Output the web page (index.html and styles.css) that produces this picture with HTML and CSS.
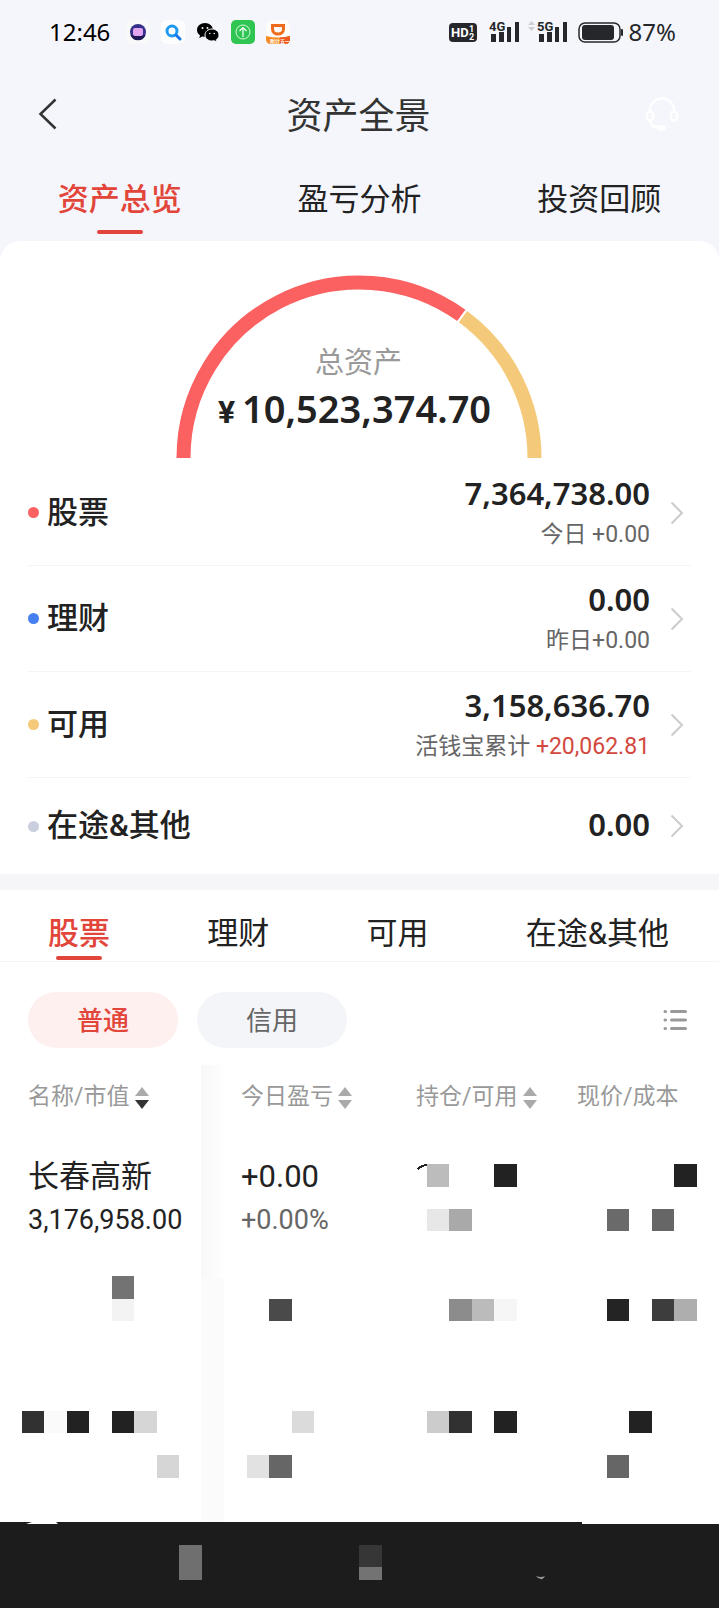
FILE: index.html
```
<!DOCTYPE html>
<html lang="zh-CN">
<head>
    <meta charset="UTF-8">
    <meta name="viewport" content="width=device-width, initial-scale=1.0">
    <title>资产全景</title>
    <link rel="stylesheet" href="styles.css">
</head>
<body>
    <!-- 状态栏 -->
    <div class="status-bar">
        <span class="status-text time">12:46</span>
        <div class="status-apps">
            <svg width="24" height="24" viewBox="0 0 24 24">
                <rect width="24" height="24" rx="6" fill="#f9f9fa"/>
                <circle cx="12" cy="12" r="8" fill="#35318a"/>
                <path d="M4.500 15a8 8 0 0 0 15 0z" fill="#1f1a55"/>
                <rect x="7" y="8" width="10" height="8" rx="2" fill="#e3a5f0"/>
            </svg>
            <svg width="24" height="24" viewBox="0 0 24 24">
                <rect width="24" height="24" rx="6" fill="#fdfdfd"/>
                <circle cx="11" cy="11" r="5" fill="none" stroke="#1e9bf0" stroke-width="3"/>
                <path d="M15 15l4 4" stroke="#1477ee" stroke-width="3" stroke-linecap="round"/>
            </svg>
            <svg width="24" height="24" viewBox="0 0 24 24">
                <path d="M9 3C4.500 3 1 6 1 10c0 2.200 1.100 4 3 5.300L3.300 18l3-1.600c.9.200 1.800.4 2.700.4 4.400 0 8-3 8-6.800S13.400 3 9 3z" fill="#000"/>
                <path d="M16 9c-4 0-7 2.600-7 6s3 6 7 6c.8 0 1.600-.1 2.300-.3l2.700 1.300-.6-2.300C22 18.600 23 17 23 15c0-3.400-3-6-7-6z" fill="#000" stroke="#f5f6fb" stroke-width="1"/>
                <circle cx="6.500" cy="8" r="1" fill="#f5f6fb"/>
                <circle cx="11.500" cy="8" r="1" fill="#f5f6fb"/>
                <circle cx="13.800" cy="13.500" r=".8" fill="#f5f6fb"/>
                <circle cx="18.200" cy="13.500" r=".8" fill="#f5f6fb"/>
            </svg>
            <svg width="24" height="24" viewBox="0 0 24 24">
                <rect width="24" height="24" rx="5" fill="#2fc552"/>
                <circle cx="12" cy="12" r="7" fill="none" stroke="#d9f7df" stroke-width="1"/>
                <path d="M12 17V8M8.500 11L12 7.500 15.500 11" fill="none" stroke="#fff" stroke-width="1.200"/>
            </svg>
            <svg width="24" height="24" viewBox="0 0 24 24">
                <rect width="24" height="24" rx="6" fill="#fdfcfb"/>
                <path d="M0 16q12 3 24 0v3q0 5-5 5H5q-5 0-5-5z" fill="#f68a1f"/>
                <path d="M14 17.500q6-.3 10-1.500v3q0 5-5 5h-5z" fill="#ee5a22"/>
                <path d="M6.500 5.500H17.500V9a5.500 5 0 0 1-11 0z" fill="none" stroke="#ee6c1c" stroke-width="3"/>
                <text x="4" y="23" class="mini-label">附计五一</text>
            </svg>
        </div>
        <div class="status-signals">
            <svg width="35" height="24" viewBox="0 0 35 24">
                <rect y="3" width="28" height="19" rx="4" fill="#25272b"/>
                <text x="2" y="17" class="hd-label">HD</text>
                <text x="20" y="12" class="hd-sub">1</text>
                <text x="20" y="20" class="hd-sub">2</text>
            </svg>
            <svg width="34" height="24" viewBox="0 0 34 24">
                <text x="0" y="11" class="net-label">4G</text>
                <path d="M2 14h5v8H2zM10 12h5v10h-5zM18 7h4v15h-4zM26 2h4v20h-4z" fill="#25272b"/>
            </svg>
            <svg width="45" height="24" viewBox="0 0 45 24">
                <path d="M0 5l3.500-4L7 5zM0 7h7l-3.500 4z" fill="#cfd0d4"/>
                <text x="9" y="11" class="net-label">5G</text>
                <path d="M11 14h5v8h-5zM19 12h5v10h-5zM27 7h4v15h-4zM35 2h4v20h-4z" fill="#25272b"/>
            </svg>
            <svg width="46" height="24" viewBox="0 0 46 24">
                <rect x="1" y="3" width="41" height="19" rx="6" fill="none" stroke="#25272b" stroke-width="1.500"/>
                <rect x="4" y="5" width="32" height="15" rx="3" fill="#25272b"/>
                <rect x="43" y="9" width="2" height="7" rx="1" fill="#25272b"/>
            </svg>
            <span class="status-text">87%</span>
        </div>
    </div>

    <!-- 标题栏 -->
    <header class="title-bar">
        <button class="icon-btn" aria-label="返回">
            <svg width="20" height="32" viewBox="0 0 20 32"><path d="M17.500 1.500L2.500 16l15 14.500" fill="none" stroke="#333" stroke-width="2.500"/></svg>
        </button>
        <h1>资产全景</h1>
        <button class="icon-btn" aria-label="客服">
            <svg width="34" height="34" viewBox="0 0 34 34" fill="none" stroke="#fff" stroke-width="2.400">
                <path d="M4.500 14.500a12.500 13 0 0 1 25 0"/>
                <rect x="2" y="14.500" width="6" height="9" rx="3"/>
                <rect x="26" y="14.500" width="6" height="9" rx="3"/>
                <path d="M5 23.500q1.500 7 9 7.500"/>
                <rect x="13.500" y="29.500" width="6" height="3" rx="1.500"/>
            </svg>
        </button>
    </header>

    <nav class="main-tabs">
        <a href="#" class="main-tab active">资产总览</a>
        <a href="#" class="main-tab">盈亏分析</a>
        <a href="#" class="main-tab">投资回顾</a>
    </nav>

    <main>
        <!-- 总资产 -->
        <section class="overview">
            <div class="gauge">
                <svg class="gauge-arc" width="366" height="183" viewBox="0 0 366 183" fill="none" stroke-width="14">
                    <path d="M7.500 183A175.500 175.500 0 0 1 285.300 40.400" stroke="#fc6161"/>
                    <path d="M287 41.700A175.500 175.500 0 0 1 358.500 183" stroke="#f4ca7a"/>
                </svg>
                <div class="gauge-text">
                    <div class="gauge-label">总资产</div>
                    <div class="gauge-amount"><span class="yen">¥</span>10,523,374.70</div>
                </div>
            </div>

            <ul class="asset-list">
                <li>
                    <a href="#" class="asset-row">
                        <span class="dot red"></span>
                        <span class="asset-name">股票</span>
                        <span class="asset-value">
                            <strong>7,364,738.00</strong>
                            <small>今日 +0.00</small>
                        </span>
                        <svg class="chevron" width="14" height="24" viewBox="0 0 14 24"><path d="M1.500 1.500L12 12 1.500 22.500"/></svg>
                    </a>
                </li>
                <li>
                    <a href="#" class="asset-row">
                        <span class="dot blue"></span>
                        <span class="asset-name">理财</span>
                        <span class="asset-value">
                            <strong>0.00</strong>
                            <small>昨日+0.00</small>
                        </span>
                        <svg class="chevron" width="14" height="24" viewBox="0 0 14 24"><path d="M1.500 1.500L12 12 1.500 22.500"/></svg>
                    </a>
                </li>
                <li>
                    <a href="#" class="asset-row">
                        <span class="dot yellow"></span>
                        <span class="asset-name">可用</span>
                        <span class="asset-value">
                            <strong>3,158,636.70</strong>
                            <small>活钱宝累计 <span class="up">+20,062.81</span></small>
                        </span>
                        <svg class="chevron" width="14" height="24" viewBox="0 0 14 24"><path d="M1.500 1.500L12 12 1.500 22.500"/></svg>
                    </a>
                </li>
                <li>
                    <a href="#" class="asset-row short">
                        <span class="dot gray"></span>
                        <span class="asset-name">在途&amp;其他</span>
                        <span class="asset-value"><strong>0.00</strong></span>
                        <svg class="chevron" width="14" height="24" viewBox="0 0 14 24"><path d="M1.500 1.500L12 12 1.500 22.500"/></svg>
                    </a>
                </li>
            </ul>
        </section>

        <!-- 持仓明细 -->
        <section class="holdings">
            <nav class="sub-tabs">
                <a href="#" class="sub-tab active">股票</a>
                <a href="#" class="sub-tab">理财</a>
                <a href="#" class="sub-tab">可用</a>
                <a href="#" class="sub-tab">在途&amp;其他</a>
            </nav>

            <div class="filters">
                <button class="pill active">普通</button>
                <button class="pill">信用</button>
                <button class="icon-btn list-btn" aria-label="列表">
                    <svg width="24" height="22" viewBox="0 0 24 22" stroke="#999" stroke-width="3" stroke-linecap="round">
                        <path d="M2 2.500h.5M2 11h.5M2 19.500h.5M8.500 2.500h14M8.500 11h14M8.500 19.500h14"/>
                    </svg>
                </button>
            </div>

            <div class="table-wrap">
                <table>
                    <colgroup>
                        <col class="col-name">
                        <col class="col-profit">
                        <col class="col-position">
                        <col>
                    </colgroup>
                    <thead>
                        <tr>
                            <th>名称/市值<svg class="sort" width="14" height="22" viewBox="0 0 14 22"><path d="M0 9l7-9 7 9z" fill="#aaa"/><path d="M0 13h14l-7 9z" fill="#333"/></svg></th>
                            <th>今日盈亏<svg class="sort" width="14" height="22" viewBox="0 0 14 22"><path d="M0 9l7-9 7 9zM0 13h14l-7 9z" fill="#aaa"/></svg></th>
                            <th>持仓/可用<svg class="sort" width="14" height="22" viewBox="0 0 14 22"><path d="M0 9l7-9 7 9zM0 13h14l-7 9z" fill="#aaa"/></svg></th>
                            <th>现价/成本</th>
                        </tr>
                    </thead>
                    <tbody>
                        <tr>
                            <td>
                                <div class="cell-main">长春高新</div>
                                <div class="cell-sub dark">3,176,958.00</div>
                            </td>
                            <td>
                                <div class="cell-main">+0.00</div>
                                <div class="cell-sub">+0.00%</div>
                            </td>
                            <td></td>
                            <td></td>
                        </tr>
                        <tr><td></td><td></td><td></td><td></td></tr>
                        <tr><td></td><td></td><td></td><td></td></tr>
                    </tbody>
                </table>
                <div class="column-shadow"></div>
                <!-- 打码色块 -->
                <svg class="mosaic" width="719" height="465" viewBox="0 0 719 465" shape-rendering="crispEdges">
                    <path d="M417 112q4-6 14-5v1q-7 0-13 5z" fill="#222"/>
                    <rect x="427" y="107" width="22" height="23" fill="#bcbcbc"/>
                    <rect x="494" y="107" width="23" height="23" fill="#222"/>
                    <rect x="674" y="107" width="23" height="23" fill="#222"/>
                    <rect x="427" y="152" width="22" height="22" fill="#e7e7e7"/>
                    <rect x="449" y="152" width="23" height="22" fill="#a9a9a9"/>
                    <rect x="607" y="152" width="22" height="22" fill="#6a6a6a"/>
                    <rect x="652" y="152" width="22" height="22" fill="#666"/>
                    <rect x="112" y="219" width="22" height="23" fill="#737373"/>
                    <rect x="112" y="242" width="22" height="22" fill="#f3f3f3"/>
                    <rect x="269" y="242" width="23" height="22" fill="#4a4a4a"/>
                    <rect x="449" y="242" width="23" height="22" fill="#8c8c8c"/>
                    <rect x="472" y="242" width="22" height="22" fill="#bbb"/>
                    <rect x="494" y="242" width="23" height="22" fill="#f6f6f6"/>
                    <rect x="607" y="242" width="22" height="22" fill="#242424"/>
                    <rect x="652" y="242" width="22" height="22" fill="#3d3d3d"/>
                    <rect x="674" y="242" width="23" height="22" fill="#aeaeae"/>
                    <rect x="22" y="354" width="22" height="22" fill="#313131"/>
                    <rect x="44" y="354" width="23" height="22" fill="#fafafa"/>
                    <rect x="67" y="354" width="22" height="22" fill="#222"/>
                    <rect x="112" y="354" width="22" height="22" fill="#222"/>
                    <rect x="134" y="354" width="23" height="22" fill="#d6d6d6"/>
                    <rect x="292" y="354" width="22" height="22" fill="#dbdbdb"/>
                    <rect x="427" y="354" width="22" height="22" fill="#ccc"/>
                    <rect x="449" y="354" width="23" height="22" fill="#313131"/>
                    <rect x="494" y="354" width="23" height="22" fill="#222"/>
                    <rect x="629" y="354" width="23" height="22" fill="#222"/>
                    <rect x="157" y="398" width="22" height="23" fill="#d6d6d6"/>
                    <rect x="247" y="398" width="22" height="23" fill="#e2e2e2"/>
                    <rect x="269" y="398" width="23" height="23" fill="#666"/>
                    <rect x="607" y="398" width="22" height="23" fill="#666"/>
                </svg>
            </div>
        </section>
    </main>

    <footer class="nav-bar">
        <svg width="719" height="86" viewBox="0 0 719 86">
            <path d="M26 2l6-2h24l2 2zM582 0h137v2H582z" fill="#fff"/>
            <rect x="179" y="23" width="23" height="35" fill="#6f6f6f"/>
            <rect x="359" y="23" width="23" height="22" fill="#363636"/>
            <rect x="359" y="45" width="23" height="13" fill="#737373"/>
            <path d="M536 54q5 2 9 0-2 4-4 3-3 0-5-3z" fill="#999"/>
        </svg>
    </footer>
</body>
</html>
```

FILE: styles.css
```
* {
    box-sizing: border-box;
    margin: 0;
    padding: 0;
}

body {
    font-family: Roboto, "Noto Sans CJK SC", sans-serif;
    background-color: #f5f6fb;
    color: #222;
    font-size: 31px;
}

a {
    color: inherit;
    text-decoration: none;
}

svg {
    display: block;
    flex: none;
}

ul {
    list-style: none;
}

.icon-btn {
    border: none;
    background: none;
    cursor: pointer;
}

/* 状态栏 */
.status-bar {
    display: flex;
    align-items: center;
    height: 64px;
    padding: 0 43px 0 49px;
}

.status-text {
    font-family: "Noto Sans", sans-serif;
    font-size: 24px;
    line-height: 32px;
    color: #25272b;
}

.status-text.time {
    color: #000;
}

.status-apps {
    display: flex;
    gap: 11px;
    margin-left: 16px;
}

.status-signals {
    display: flex;
    align-items: center;
    gap: 5px;
    margin-left: auto;
}

.mini-label {
    font-size: 5px;
    font-weight: bold;
    fill: #fff;
}

.hd-label {
    font-size: 13px;
    font-weight: bold;
    fill: #fff;
}

.hd-sub {
    font-size: 9px;
    font-weight: bold;
    fill: #fff;
}

.net-label {
    font-size: 13px;
    font-weight: bold;
    fill: #25272b;
}

/* 标题栏 */
.title-bar {
    display: grid;
    grid-template-columns: 1fr auto 1fr;
    align-items: center;
    height: 100px;
    padding: 0 40px 0 38px;
}

.title-bar h1 {
    padding-top: 5px;
    font-size: 36px;
    font-weight: normal;
    line-height: 48px;
    color: #333;
}

.title-bar .icon-btn:last-child {
    justify-self: end;
}

.title-bar .icon-btn:first-child {
    justify-self: start;
}

/* 一级标签 */
.main-tabs {
    display: grid;
    grid-template-columns: repeat(3, 1fr);
}

.main-tab {
    padding: 14px 0 7px;
    line-height: 44px;
    text-align: center;
}

.main-tab::after,
.sub-tab::after {
    content: "";
    display: block;
    width: 46px;
    height: 4px;
    margin: 8px auto 0;
    border-radius: 2px;
}

.main-tab.active,
.sub-tab.active {
    color: #e2453a;
    font-weight: 500;
}

.main-tab.active::after,
.sub-tab.active::after {
    background-color: #e2453a;
}

/* 总资产 */
.overview {
    background-color: #fff;
    border-radius: 20px 20px 0 0;
    padding: 34px 28px 0;
}

.gauge {
    display: grid;
    justify-items: center;
    padding-right: 2px;
}

.gauge-arc,
.gauge-text {
    grid-area: 1 / 1;
}

.gauge-text {
    padding-top: 68px;
    text-align: center;
}

.gauge-label {
    font-size: 29px;
    line-height: 40px;
    color: #999;
}

.gauge-amount {
    font-family: "Noto Sans", sans-serif;
    font-size: 38px;
    font-weight: 600;
    line-height: 50px;
    padding-right: 8px;
}

.yen {
    font-family: Roboto, sans-serif;
    font-size: 32px;
    font-weight: bold;
    margin-right: 7px;
}

/* 资产列表 */
.asset-list {
    padding-top: 2px;
}

.asset-row {
    display: flex;
    align-items: center;
    height: 106px;
    padding-right: 7px;
    border-bottom: 1px solid #f5f5f7;
}

.asset-row.short {
    height: 96px;
    border-bottom: none;
}

.dot {
    width: 11px;
    height: 11px;
    margin-right: 8px;
    border-radius: 50%;
}

.dot.red {
    background-color: #fc6161;
}

.dot.blue {
    background-color: #4680f0;
}

.dot.yellow {
    background-color: #f4ca7a;
}

.dot.gray {
    background-color: #c9cfdf;
}

.asset-name {
    font-weight: 500;
    line-height: 44px;
}

.asset-value {
    display: flex;
    flex-direction: column;
    margin-left: auto;
    margin-right: 20px;
    text-align: right;
}

.asset-value strong {
    padding-bottom: 4px;
    font-family: "Noto Sans", sans-serif;
    font-size: 31px;
    font-weight: 600;
    line-height: 40px;
}

.asset-value small {
    font-size: 23px;
    line-height: 36px;
    color: #666;
}

.asset-value .up {
    color: #d2493f;
}

.chevron {
    fill: none;
    stroke: #ccc;
    stroke-width: 2px;
}

/* 持仓明细 */
.holdings {
    border-top: 16px solid #f6f6f9;
    background-color: #fff;
}

.sub-tabs {
    display: flex;
    justify-content: space-between;
    padding: 22px 50px 1px 48px;
    border-bottom: 1px solid #f5f5f7;
}

.sub-tab {
    line-height: 44px;
}

.sub-tab::after {
    margin-top: 0;
}

.filters {
    display: flex;
    align-items: center;
    gap: 19px;
    padding: 30px 32px 9px 28px;
}

.pill {
    width: 150px;
    height: 56px;
    padding-bottom: 4px;
    border: none;
    border-radius: 28px;
    background-color: #f4f5f8;
    color: #666;
    font-family: inherit;
    font-size: 26px;
    cursor: pointer;
}

.pill.active {
    background-color: #fef0ef;
    color: #e2453a;
    font-weight: 500;
}

.list-btn {
    margin-left: auto;
}

/* 表格 */
.table-wrap {
    position: relative;
    overflow: hidden;
    padding-bottom: 17px;
}

table {
    width: 100%;
    table-layout: fixed;
    border-collapse: collapse;
}

.col-name {
    width: 201px;
}

.col-profit {
    width: 175px;
}

.col-position {
    width: 161px;
}

th {
    height: 79px;
    padding-bottom: 5px;
    padding-left: 40px;
    font-size: 23px;
    font-weight: normal;
    text-align: left;
    white-space: nowrap;
    color: #999;
}

td {
    height: 123px;
    padding-left: 40px;
    white-space: nowrap;
}

th:first-child,
td:first-child {
    padding-left: 28px;
}

.sort {
    display: inline-block;
    margin-left: 5px;
    vertical-align: middle;
}

.cell-main {
    font-size: 31px;
    line-height: 44px;
}

.cell-sub {
    font-size: 27px;
    line-height: 42px;
    color: #666;
}

.cell-sub.dark {
    color: #222;
}

/* 固定列右侧阴影 */
.column-shadow {
    position: absolute;
    top: 8px;
    bottom: 0;
    left: 201px;
    width: 23px;
    background:
        linear-gradient(90deg, #f8f8f8, #fefefe) 0 0 / 100% 213px no-repeat,
        #fbfbfb;
}

.mosaic {
    position: absolute;
    top: 0;
    left: 0;
}

/* 底部导航 */
.nav-bar {
    overflow: hidden;
    background-color: #1c1c1c;
}
```
